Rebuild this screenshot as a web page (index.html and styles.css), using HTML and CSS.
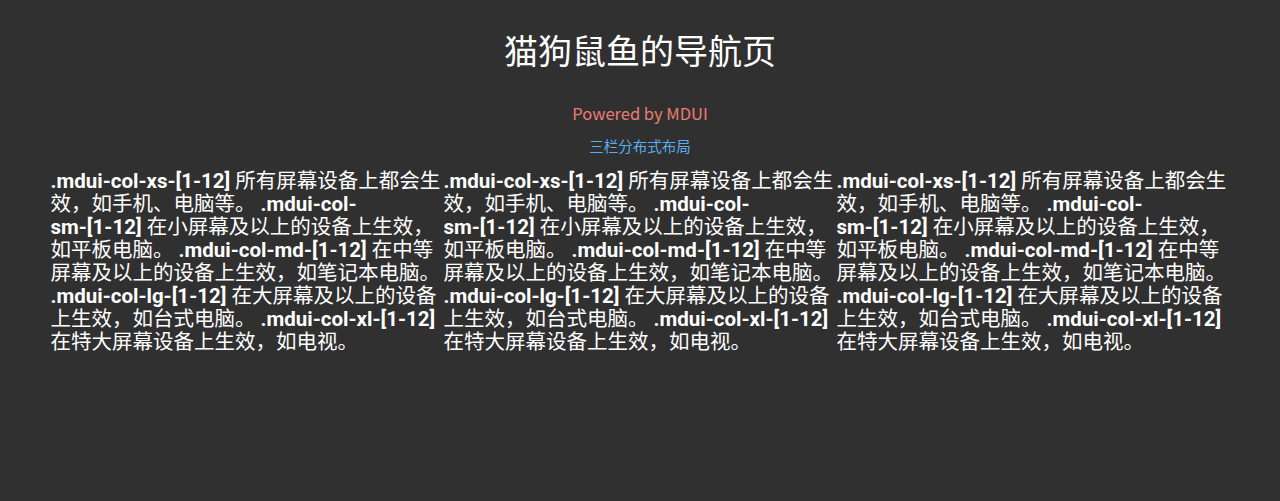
FILE: index.html
```html
<!DOCTYPE html>
<html lang="zh-CN">
<head>
<meta charset="utf-8">
<title>猫狗鼠鱼的导航页</title>
<link rel="stylesheet" href="styles.css">
</head>
<body>
<header class="head">
  <h1 class="title">猫狗鼠鱼的导航页</h1>
  <p class="powered">Powered by MDUI</p>
  <p class="subtitle">三栏分布式布局</p>
</header>
<div class="container">
  <div class="row">
    <div class="col"><b class="cls">.mdui-col-<span class="nw">xs-[1-12]</span></b> 所有屏幕设备上都会生效，如手机、电脑等。 <b class="cls">.mdui-col-<span class="nw">sm-[1-12]</span></b> 在小屏幕及以上的设备上生效，如平板电脑。 <b class="cls">.mdui-col-<span class="nw">md-[1-12]</span></b> 在中等屏幕及以上的设备上生效，如笔记本电脑。 <b class="cls">.mdui-col-<span class="nw">lg-[1-12]</span></b> 在大屏幕及以上的设备上生效，如台式电脑。 <b class="cls">.mdui-col-<span class="nw">xl-[1-12]</span></b> 在特大屏幕设备上生效，如电视。</div>
    <div class="col"><b class="cls">.mdui-col-<span class="nw">xs-[1-12]</span></b> 所有屏幕设备上都会生效，如手机、电脑等。 <b class="cls">.mdui-col-<span class="nw">sm-[1-12]</span></b> 在小屏幕及以上的设备上生效，如平板电脑。 <b class="cls">.mdui-col-<span class="nw">md-[1-12]</span></b> 在中等屏幕及以上的设备上生效，如笔记本电脑。 <b class="cls">.mdui-col-<span class="nw">lg-[1-12]</span></b> 在大屏幕及以上的设备上生效，如台式电脑。 <b class="cls">.mdui-col-<span class="nw">xl-[1-12]</span></b> 在特大屏幕设备上生效，如电视。</div>
    <div class="col"><b class="cls">.mdui-col-<span class="nw">xs-[1-12]</span></b> 所有屏幕设备上都会生效，如手机、电脑等。 <b class="cls">.mdui-col-<span class="nw">sm-[1-12]</span></b> 在小屏幕及以上的设备上生效，如平板电脑。 <b class="cls">.mdui-col-<span class="nw">md-[1-12]</span></b> 在中等屏幕及以上的设备上生效，如笔记本电脑。 <b class="cls">.mdui-col-<span class="nw">lg-[1-12]</span></b> 在大屏幕及以上的设备上生效，如台式电脑。 <b class="cls">.mdui-col-<span class="nw">xl-[1-12]</span></b> 在特大屏幕设备上生效，如电视。</div>
  </div>
</div>
</body>
</html>
```

FILE: styles.css
```css
html, body {
  margin: 0;
  padding: 0;
  background: #303030;
  color: #fff;
  font-family: Roboto, "Noto Sans CJK SC", sans-serif;
}
.head {
  text-align: center;
  padding-top: 28px;
}
.title {
  margin: 0;
  font-size: 34px;
  font-weight: 400;
  line-height: 44px;
  font-family: "Noto Sans CJK SC", sans-serif;
}
.powered {
  margin: 0;
  margin-top: 30px;
  font-size: 16.5px;
  line-height: 22px;
  color: #ef7b73;
  font-family: "Noto Sans CJK SC", sans-serif;
}
.subtitle {
  margin: 0;
  margin-top: 11px;
  font-size: 14.5px;
  line-height: 22px;
  color: #5aaeee;
  font-family: "Noto Sans CJK SC", sans-serif;
}
.container {
  width: 1179px;
  margin: 0 auto;
  padding-top: 13px;
}
.row {
  display: grid;
  grid-template-columns: repeat(3, 1fr);
}
.col {
  font-size: 20.5px;
  font-weight: 400;
  line-height: 23px;
}
.cls {
  font-weight: 700;
}
.nw {
  white-space: nowrap;
}
```
